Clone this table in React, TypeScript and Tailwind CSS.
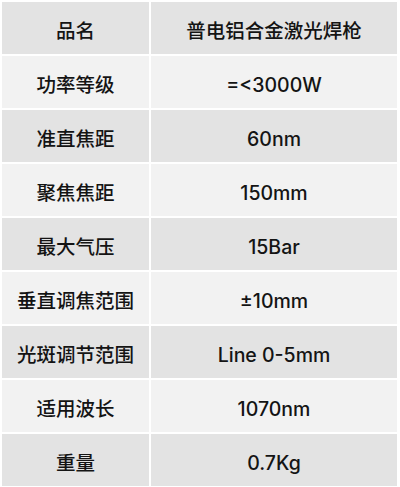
const rows: [string, string][] = [
  ["品名", "普电铝合金激光焊枪"],
  ["功率等级", "=<3000W"],
  ["准直焦距", "60nm"],
  ["聚焦焦距", "150mm"],
  ["最大气压", "15Bar"],
  ["垂直调焦范围", "±10mm"],
  ["光斑调节范围", "Line 0-5mm"],
  ["适用波长", "1070nm"],
  ["重量", "0.7Kg"],
];

const App = () => {
  return (
    <div
      className="w-[400px] h-[487px] overflow-hidden bg-white pt-[2px] pl-[2px] pr-[3px]"
      style={{ fontFamily: "Inter, 'Noto Sans CJK SC', sans-serif" }}
    >
      <div className="grid grid-cols-[147px_1fr] gap-[2px] text-[19.5px] font-medium text-[#141414]">
        {rows.map(([name, value], i) => {
          const bg = i % 2 === 0 ? "bg-[#e3e3e3]" : "bg-[#f2f2f2]";
          return [
            <div
              key={name}
              className={`h-[52px] flex items-center justify-center pt-[8px] ${bg}`}
            >
              {name}
            </div>,
            <div
              key={name + "-v"}
              className={`h-[52px] flex items-center justify-center pt-[8px] ${bg}`}
            >
              {value}
            </div>,
          ];
        })}
      </div>
    </div>
  );
};

export default App;
